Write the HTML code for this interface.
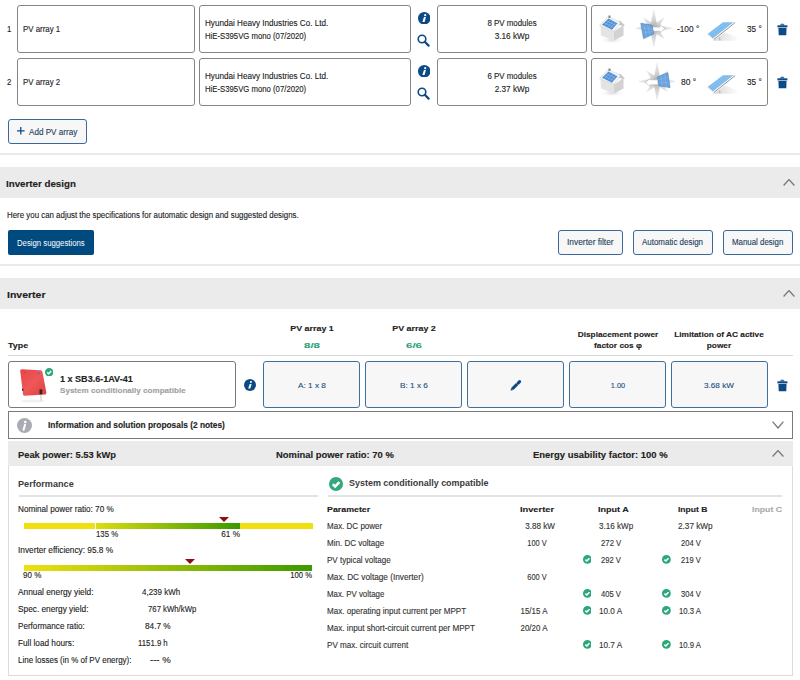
<!DOCTYPE html><html><head><meta charset="utf-8"><style>
html,body{margin:0;padding:0;width:800px;height:680px;overflow:hidden;background:#fff;position:relative}
.t{position:absolute;white-space:nowrap;line-height:1;font-family:"Liberation Sans",sans-serif;-webkit-text-stroke:0.12px currentColor}
</style></head><body>
<div class="t" style="left:7.30px;top:25.00px;font-size:8.4px;color:#222;transform:scaleX(0.9350);transform-origin:left top;">1</div>
<div style="position:absolute;left:17px;top:5px;width:178px;height:48px;box-sizing:border-box;border:1px solid #858585;border-radius:3px;"></div>
<div class="t" style="left:23.20px;top:25.00px;font-size:8.4px;color:#222;transform:scaleX(0.9399);transform-origin:left top;">PV array 1</div>
<div style="position:absolute;left:199px;top:5px;width:212px;height:48px;box-sizing:border-box;border:1px solid #858585;border-radius:3px;"></div>
<div class="t" style="left:205.30px;top:19.00px;font-size:8.3px;color:#222;transform:scaleX(0.9785);transform-origin:left top;">Hyundai Heavy Industries Co. Ltd.</div>
<div class="t" style="left:205.30px;top:32.00px;font-size:8.3px;color:#222;transform:scaleX(0.9337);transform-origin:left top;">HiE-S395VG mono (07/2020)</div>
<svg style="position:absolute;left:417.75px;top:11.75px" width="12.5" height="12.5" viewBox="0 0 12 12"><circle cx="6" cy="6" r="6" fill="#0b4a85"/><circle cx="6.9" cy="3.0" r="1.05" fill="#fff"/><path d="M5.7 4.9 L7.6 4.9 L6.3 9.6 L4.2 9.6 Z" fill="#fff"/></svg>
<svg style="position:absolute;left:417.3px;top:33.5px" width="13" height="13" viewBox="0 0 13 13"><circle cx="5" cy="5" r="3.8" fill="none" stroke="#0b4a85" stroke-width="1.6"/><path d="M7.8 7.8 L11.6 11.6" stroke="#0b4a85" stroke-width="2.2" stroke-linecap="round"/></svg>
<div style="position:absolute;left:437px;top:5px;width:150px;height:48px;box-sizing:border-box;border:1px solid #858585;border-radius:3px;"></div>
<div class="t" style="left:311.75px;width:400px;text-align:center;top:19.00px;font-size:8.3px;color:#222;transform:scaleX(0.9525);transform-origin:center top;">8 PV modules</div>
<div class="t" style="left:312px;width:400px;text-align:center;top:32.00px;font-size:8.3px;color:#222;transform:scaleX(0.9897);transform-origin:center top;">3.16 kWp</div>
<div style="position:absolute;left:591px;top:5px;width:177px;height:48px;box-sizing:border-box;border:1px solid #858585;border-radius:3px;"></div>
<svg style="position:absolute;left:596px;top:10px" width="32" height="36" viewBox="596 10 32 36"><defs><radialGradient id="hsh0"><stop offset="0" stop-color="#d8d8d8"/><stop offset="1" stop-color="#fff" stop-opacity="0"/></radialGradient></defs>
<ellipse cx="612" cy="40" rx="13" ry="4" fill="url(#hsh0)"/>
<path d="M600.5 26 L614 31.5 L614 40.5 L601 35.5 Z" fill="#e4e4e4"/>
<path d="M614 31.5 L623.5 25 L623.5 35.5 L614 40.5 Z" fill="#d2d2d2"/>
<path d="M616 24 L620 20.5 L625 25.5 L623 26 Z" fill="#c8c8c8"/>
<path d="M599.5 25.5 L608 16.5 L620.5 22.5 L614 31.5 Z" fill="#f7f7f7" stroke="#c4c4c4" stroke-width="0.5"/>
<path d="M602 24.8 L608.5 18.5 L617.5 23.2 L612 29.8 Z" fill="#4f8fd6"/>
<path d="M604 22.8 L613.8 27.5 M606 20.7 L615.8 25.3 M604.5 26 L610.7 19.6 M607.5 27.3 L613.5 20.8 M610 28.5 L615.8 22" stroke="#a9cdf0" stroke-width="0.45"/>
<rect x="608.5" y="15.5" width="2" height="2.5" fill="#888"/></svg>
<svg style="position:absolute;left:630px;top:8px" width="50" height="40" viewBox="630 8 50 40"><defs><radialGradient id="cg0" cx="653.8" cy="28.3" r="18" gradientUnits="userSpaceOnUse"><stop offset="0" stop-color="#a8a8a8"/><stop offset="0.45" stop-color="#d2d2d2"/><stop offset="1" stop-color="#f0f0f0"/></radialGradient></defs>
<path d="M642.5999999999999 17.1 L654.0999999999999 24.14 L665.0 17.1 L657.9599999999999 28.3 L665.0 39.5 L653.8 32.46 L642.5999999999999 39.5 L649.64 28.3 Z" fill="url(#cg0)" opacity="0.85"/>
<path d="M653.8 10.2 L657.0 25.1 L671.9 28.3 L657.0 31.5 L653.8 46.400000000000006 L650.5999999999999 31.5 L635.6999999999999 28.3 L650.5999999999999 25.1 Z" fill="url(#cg0)" stroke="#cfcfcf" stroke-width="0.3"/>
<path d="M651.5 27.1 L660 27.1 L660 24.5 L664.8 28.6 L660 32.7 L660 31.2 L651.5 31.2 Z" fill="#fff" stroke="#a8a8a8" stroke-width="0.5"/>
<path d="M640.8 23.3 L652 25.1 L653.8 33.9 L643.5 38.6 Z" fill="#6aa3de" stroke="#4a82c0" stroke-width="0.6"/>
<path d="M644 24.5 L646.5 37 M647.8 25 L649.8 35.5 M641.8 28 L652.8 29 M642.5 33 L653 31.5" stroke="#9cc4ec" stroke-width="0.35"/></svg>
<div class="t" style="left:677.30px;top:25.00px;font-size:8.3px;color:#222;transform:scaleX(0.9985);transform-origin:left top;">-100 °</div>
<svg style="position:absolute;left:704px;top:18px" width="36" height="26" viewBox="704 18 36 26"><defs><linearGradient id="psh0" x1="0" x2="1"><stop offset="0" stop-color="#d6d6d6"/><stop offset="1" stop-color="#fff"/></linearGradient></defs>
<path d="M713 40.8 L739 40.8 L737 37 L725 32.5 Z" fill="url(#psh0)"/>
<path d="M707.8 33.8 L723 22.2 L733.6 22.2 L713 38.4 Z" fill="#7dbcef"/>
<path d="M710.5 34 L725.5 23 M714 35.5 L729.5 23" stroke="#a6d2f4" stroke-width="0.35"/>
<path d="M707.8 33.8 L713 38.4 L713.8 39.4 L707.2 34.6 Z" fill="#d8d8d8"/>
<path d="M713 38.4 L733.6 22.2 L734.8 22.4 L713.8 39.4 Z" fill="#f4f4f4"/>
<path d="M713.8 39.6 L735.2 22.6" stroke="#8a8a8a" stroke-width="0.9"/>
<path d="M719.5 37.5 L720 40.5" stroke="#999" stroke-width="0.7"/></svg>
<div class="t" style="left:747.30px;top:25.00px;font-size:8.3px;color:#222;transform:scaleX(0.9893);transform-origin:left top;">35 °</div>
<svg style="position:absolute;left:776.5px;top:22.5px" width="11" height="13" viewBox="0 0 11 13"><path d="M0.4 2.3 H10.4 V4.4 H0.4 Z" fill="#0b4a85"/><path d="M3 2.4 Q3 0.6 5.2 0.6 Q7.5 0.6 7.5 2.4 Z" fill="#0b4a85" opacity="0.75"/><path d="M1.4 5.1 H9.5 L9.3 12.3 H1.7 Z" fill="#0b4a85"/></svg>
<div class="t" style="left:7.30px;top:78.00px;font-size:8.4px;color:#222;transform:scaleX(0.9350);transform-origin:left top;">2</div>
<div style="position:absolute;left:17px;top:58px;width:178px;height:48px;box-sizing:border-box;border:1px solid #858585;border-radius:3px;"></div>
<div class="t" style="left:23.20px;top:78.00px;font-size:8.4px;color:#222;transform:scaleX(0.9399);transform-origin:left top;">PV array 2</div>
<div style="position:absolute;left:199px;top:58px;width:212px;height:48px;box-sizing:border-box;border:1px solid #858585;border-radius:3px;"></div>
<div class="t" style="left:205.30px;top:72.00px;font-size:8.3px;color:#222;transform:scaleX(0.9785);transform-origin:left top;">Hyundai Heavy Industries Co. Ltd.</div>
<div class="t" style="left:205.30px;top:85.00px;font-size:8.3px;color:#222;transform:scaleX(0.9337);transform-origin:left top;">HiE-S395VG mono (07/2020)</div>
<svg style="position:absolute;left:417.75px;top:64.75px" width="12.5" height="12.5" viewBox="0 0 12 12"><circle cx="6" cy="6" r="6" fill="#0b4a85"/><circle cx="6.9" cy="3.0" r="1.05" fill="#fff"/><path d="M5.7 4.9 L7.6 4.9 L6.3 9.6 L4.2 9.6 Z" fill="#fff"/></svg>
<svg style="position:absolute;left:417.3px;top:86.5px" width="13" height="13" viewBox="0 0 13 13"><circle cx="5" cy="5" r="3.8" fill="none" stroke="#0b4a85" stroke-width="1.6"/><path d="M7.8 7.8 L11.6 11.6" stroke="#0b4a85" stroke-width="2.2" stroke-linecap="round"/></svg>
<div style="position:absolute;left:437px;top:58px;width:150px;height:48px;box-sizing:border-box;border:1px solid #858585;border-radius:3px;"></div>
<div class="t" style="left:311.75px;width:400px;text-align:center;top:72.00px;font-size:8.3px;color:#222;transform:scaleX(0.9525);transform-origin:center top;">6 PV modules</div>
<div class="t" style="left:312px;width:400px;text-align:center;top:85.00px;font-size:8.3px;color:#222;transform:scaleX(0.9897);transform-origin:center top;">2.37 kWp</div>
<div style="position:absolute;left:591px;top:58px;width:177px;height:48px;box-sizing:border-box;border:1px solid #858585;border-radius:3px;"></div>
<svg style="position:absolute;left:596px;top:63px" width="32" height="36" viewBox="596 10 32 36"><defs><radialGradient id="hsh1"><stop offset="0" stop-color="#d8d8d8"/><stop offset="1" stop-color="#fff" stop-opacity="0"/></radialGradient></defs>
<ellipse cx="612" cy="40" rx="13" ry="4" fill="url(#hsh1)"/>
<path d="M600.5 26 L614 31.5 L614 40.5 L601 35.5 Z" fill="#e4e4e4"/>
<path d="M614 31.5 L623.5 25 L623.5 35.5 L614 40.5 Z" fill="#d2d2d2"/>
<path d="M616 24 L620 20.5 L625 25.5 L623 26 Z" fill="#c8c8c8"/>
<path d="M599.5 25.5 L608 16.5 L620.5 22.5 L614 31.5 Z" fill="#f7f7f7" stroke="#c4c4c4" stroke-width="0.5"/>
<path d="M602 24.8 L608.5 18.5 L617.5 23.2 L612 29.8 Z" fill="#4f8fd6"/>
<path d="M604 22.8 L613.8 27.5 M606 20.7 L615.8 25.3 M604.5 26 L610.7 19.6 M607.5 27.3 L613.5 20.8 M610 28.5 L615.8 22" stroke="#a9cdf0" stroke-width="0.45"/>
<rect x="608.5" y="15.5" width="2" height="2.5" fill="#888"/></svg>
<svg style="position:absolute;left:630px;top:61px" width="50" height="40" viewBox="630 8 50 40"><defs><radialGradient id="cg1" cx="657.1" cy="28.4" r="18" gradientUnits="userSpaceOnUse"><stop offset="0" stop-color="#a8a8a8"/><stop offset="0.45" stop-color="#d2d2d2"/><stop offset="1" stop-color="#f0f0f0"/></radialGradient></defs>
<path d="M645.9 17.2 L657.4 24.24 L668.3000000000001 17.2 L661.26 28.4 L668.3000000000001 39.599999999999994 L657.1 32.56 L645.9 39.599999999999994 L652.94 28.4 Z" fill="url(#cg1)" opacity="0.85"/>
<path d="M657.1 10.299999999999997 L660.3000000000001 25.2 L675.2 28.4 L660.3000000000001 31.599999999999998 L657.1 46.5 L653.9 31.599999999999998 L639.0 28.4 L653.9 25.2 Z" fill="url(#cg1)" stroke="#cfcfcf" stroke-width="0.3"/>
<path d="M658 26.8 L650.2 26.8 L650.2 25.2 L645.4 29.6 L650.2 33.5 L650.2 31.8 L658 31.8 Z" fill="#fff" stroke="#a8a8a8" stroke-width="0.5"/>
<path d="M657.5 24 L667.8 19.6 L670.1 34.6 L659 32.8 Z" fill="#6aa3de" stroke="#4a82c0" stroke-width="0.6"/>
<path d="M661 22.5 L662.5 33.3 M664.5 21 L666.5 34 M657.8 27 L668.6 24 M658.3 30 L669.4 29.5" stroke="#9cc4ec" stroke-width="0.35"/></svg>
<div class="t" style="left:680.90px;top:78.00px;font-size:8.3px;color:#222;transform:scaleX(1.0162);transform-origin:left top;">80 °</div>
<svg style="position:absolute;left:704px;top:71px" width="36" height="26" viewBox="704 18 36 26"><defs><linearGradient id="psh1" x1="0" x2="1"><stop offset="0" stop-color="#d6d6d6"/><stop offset="1" stop-color="#fff"/></linearGradient></defs>
<path d="M713 40.8 L739 40.8 L737 37 L725 32.5 Z" fill="url(#psh1)"/>
<path d="M707.8 33.8 L723 22.2 L733.6 22.2 L713 38.4 Z" fill="#7dbcef"/>
<path d="M710.5 34 L725.5 23 M714 35.5 L729.5 23" stroke="#a6d2f4" stroke-width="0.35"/>
<path d="M707.8 33.8 L713 38.4 L713.8 39.4 L707.2 34.6 Z" fill="#d8d8d8"/>
<path d="M713 38.4 L733.6 22.2 L734.8 22.4 L713.8 39.4 Z" fill="#f4f4f4"/>
<path d="M713.8 39.6 L735.2 22.6" stroke="#8a8a8a" stroke-width="0.9"/>
<path d="M719.5 37.5 L720 40.5" stroke="#999" stroke-width="0.7"/></svg>
<div class="t" style="left:747.30px;top:78.00px;font-size:8.3px;color:#222;transform:scaleX(0.9893);transform-origin:left top;">35 °</div>
<svg style="position:absolute;left:776.5px;top:75.5px" width="11" height="13" viewBox="0 0 11 13"><path d="M0.4 2.3 H10.4 V4.4 H0.4 Z" fill="#0b4a85"/><path d="M3 2.4 Q3 0.6 5.2 0.6 Q7.5 0.6 7.5 2.4 Z" fill="#0b4a85" opacity="0.75"/><path d="M1.4 5.1 H9.5 L9.3 12.3 H1.7 Z" fill="#0b4a85"/></svg>
<div style="position:absolute;left:8px;top:119px;width:79px;height:25px;box-sizing:border-box;border:1px solid #3a6898;border-radius:3px;background:#f7f7f7;"></div>
<svg style="position:absolute;left:17.2px;top:127.3px" width="8" height="8" viewBox="0 0 8 8"><path d="M3.8 0 V7.6 M0 3.8 H7.6" stroke="#0b4a85" stroke-width="1.25"/></svg>
<div class="t" style="left:28.80px;top:128.00px;font-size:8.3px;color:#243f60;transform:scaleX(0.9765);transform-origin:left top;">Add PV array</div>
<div style="position:absolute;left:0px;top:153px;width:800px;height:2px;box-sizing:border-box;background:#ebebeb;"></div>
<div style="position:absolute;left:0px;top:167px;width:800px;height:31px;box-sizing:border-box;background:#ebebeb;"></div>
<div class="t" style="left:6.30px;top:180.00px;font-size:9.2px;font-weight:bold;color:#222;transform:scaleX(1.0611);transform-origin:left top;">Inverter design</div>
<svg style="position:absolute;left:783px;top:179.4px" width="12" height="7.5" viewBox="0 0 12 7.5"><path d="M0.6 6.5 L6.0 0.6 L11.4 6.5" fill="none" stroke="#777" stroke-width="1.3"/></svg>
<div class="t" style="left:7.30px;top:211.00px;font-size:8.3px;color:#222;transform:scaleX(0.9510);transform-origin:left top;">Here you can adjust the specifications for automatic design and suggested designs.</div>
<div style="position:absolute;left:8px;top:230px;width:86px;height:25px;box-sizing:border-box;background:#004a80;border-radius:2px;"></div>
<div class="t" style="left:16.90px;top:239.00px;font-size:8.3px;color:#fff;transform:scaleX(0.9348);transform-origin:left top;-webkit-text-stroke:0;">Design suggestions</div>
<div style="position:absolute;left:557.5px;top:230px;width:65.0px;height:25px;box-sizing:border-box;border:1px solid #3a6898;border-radius:3px;background:#f7f7f7;"></div>
<div class="t" style="left:566.50px;top:238.00px;font-size:8.3px;color:#243f60;transform:scaleX(1.0106);transform-origin:left top;">Inverter filter</div>
<div style="position:absolute;left:633px;top:230px;width:79.5px;height:25px;box-sizing:border-box;border:1px solid #3a6898;border-radius:3px;background:#f7f7f7;"></div>
<div class="t" style="left:642.10px;top:238.00px;font-size:8.3px;color:#243f60;transform:scaleX(0.9583);transform-origin:left top;">Automatic design</div>
<div style="position:absolute;left:722.5px;top:230px;width:70.0px;height:25px;box-sizing:border-box;border:1px solid #3a6898;border-radius:3px;background:#f7f7f7;"></div>
<div class="t" style="left:731.50px;top:238.00px;font-size:8.3px;color:#243f60;transform:scaleX(0.9506);transform-origin:left top;">Manual design</div>
<div style="position:absolute;left:0px;top:264px;width:800px;height:2px;box-sizing:border-box;background:#ebebeb;"></div>
<div style="position:absolute;left:0px;top:278px;width:800px;height:31px;box-sizing:border-box;background:#ebebeb;"></div>
<div class="t" style="left:6.50px;top:291.00px;font-size:9.2px;font-weight:bold;color:#222;transform:scaleX(1.1418);transform-origin:left top;">Inverter</div>
<svg style="position:absolute;left:783px;top:290px" width="12" height="7.5" viewBox="0 0 12 7.5"><path d="M0.6 6.5 L6.0 0.6 L11.4 6.5" fill="none" stroke="#777" stroke-width="1.3"/></svg>
<div class="t" style="left:7.50px;top:342.00px;font-size:7.7px;font-weight:bold;color:#222;transform:scaleX(1.1568);transform-origin:left top;">Type</div>
<div class="t" style="left:111.5px;width:400px;text-align:center;top:325.00px;font-size:7.7px;font-weight:bold;color:#222;transform:scaleX(1.1561);transform-origin:center top;">PV array 1</div>
<div class="t" style="left:111.5px;width:400px;text-align:center;top:342.00px;font-size:7.7px;font-weight:bold;color:#2ea37a;transform:scaleX(1.4784);transform-origin:center top;">8/8</div>
<div class="t" style="left:213.5px;width:400px;text-align:center;top:325.00px;font-size:7.7px;font-weight:bold;color:#222;transform:scaleX(1.1561);transform-origin:center top;">PV array 2</div>
<div class="t" style="left:213.5px;width:400px;text-align:center;top:342.00px;font-size:7.7px;font-weight:bold;color:#2ea37a;transform:scaleX(1.4784);transform-origin:center top;">6/6</div>
<div class="t" style="left:417.9px;width:400px;text-align:center;top:331.00px;font-size:7.7px;font-weight:bold;color:#222;transform:scaleX(1.0767);transform-origin:center top;">Displacement power</div>
<div class="t" style="left:417.5px;width:400px;text-align:center;top:342.00px;font-size:7.7px;font-weight:bold;color:#222;transform:scaleX(1.0800);transform-origin:center top;">factor cos φ</div>
<div class="t" style="left:519px;width:400px;text-align:center;top:331.00px;font-size:7.7px;font-weight:bold;color:#222;transform:scaleX(1.0800);transform-origin:center top;">Limitation of AC active</div>
<div class="t" style="left:519px;width:400px;text-align:center;top:342.00px;font-size:7.7px;font-weight:bold;color:#222;transform:scaleX(1.0800);transform-origin:center top;">power</div>
<div style="position:absolute;left:8px;top:355px;width:785px;height:1px;box-sizing:border-box;background:#d8d8d8;"></div>
<div style="position:absolute;left:8px;top:361px;width:228px;height:47px;box-sizing:border-box;border:1px solid #7a7a7a;border-radius:3px;"></div>
<svg style="position:absolute;left:14px;top:364px" width="36" height="42" viewBox="14 364 36 42"><defs><linearGradient id="invg" x1="0" y1="0" x2="1" y2="1"><stop offset="0" stop-color="#e84446"/><stop offset="0.5" stop-color="#ee5858"/><stop offset="1" stop-color="#e0403f"/></linearGradient></defs>
<ellipse cx="33" cy="401" rx="12" ry="1.5" fill="#f0f0f0"/>
<path d="M21.5 369.3 L40.5 370.2 Q42 370.3 42.4 371.8 L46.4 392.5 Q46.6 394.3 45 394.5 L24.8 395.8 Q23.2 395.9 23 394.2 L20.2 370.8 Q20.1 369.3 21.5 369.3 Z" fill="url(#invg)"/>
<rect x="39.5" y="389.3" width="2.8" height="5" fill="#2a2a2a"/>
<path d="M40.8 394.5 L41.2 400.5" stroke="#999" stroke-width="0.6"/>
<rect x="22.2" y="388.5" width="1.2" height="2.5" fill="#333"/>
<path d="M37.5 373 L40 372.6 L39.5 374.5 Z" fill="#4a70b8"/>
<circle cx="24.5" cy="372.5" r="0.4" fill="#822"/></svg>
<svg style="position:absolute;left:44.699999999999996px;top:367.8px" width="8.4" height="8.4" viewBox="0 0 8.4 8.4"><circle cx="4.2" cy="4.2" r="4.2" fill="#2aa878"/><path d="M2.27 4.37 L3.70 5.71 L6.22 3.02" fill="none" stroke="#fff" stroke-width="1.51"/></svg>
<div class="t" style="left:60.30px;top:375.00px;font-size:8.6px;font-weight:bold;color:#222;transform:scaleX(1.0520);transform-origin:left top;">1 x SB3.6-1AV-41</div>
<div class="t" style="left:60.10px;top:387.00px;font-size:8.1px;font-weight:bold;color:#a0a0a0;transform:scaleX(0.9981);transform-origin:left top;">System conditionally compatible</div>
<svg style="position:absolute;left:244.0px;top:378.7px" width="12" height="12" viewBox="0 0 12 12"><circle cx="6" cy="6" r="6" fill="#0b4a85"/><circle cx="6.9" cy="3.0" r="1.05" fill="#fff"/><path d="M5.7 4.9 L7.6 4.9 L6.3 9.6 L4.2 9.6 Z" fill="#fff"/></svg>
<div style="position:absolute;left:263px;top:361px;width:97px;height:47px;box-sizing:border-box;border:1px solid #3f6f9f;border-radius:3px;background:#f7f7f7;"></div>
<div class="t" style="left:112px;width:400px;text-align:center;top:382.00px;font-size:7.7px;color:#24507e;transform:scaleX(1.0699);transform-origin:center top;">A: 1 x 8</div>
<div style="position:absolute;left:365px;top:361px;width:97px;height:47px;box-sizing:border-box;border:1px solid #3f6f9f;border-radius:3px;background:#f7f7f7;"></div>
<div class="t" style="left:214.3px;width:400px;text-align:center;top:382.00px;font-size:7.7px;color:#24507e;transform:scaleX(1.0699);transform-origin:center top;">B: 1 x 6</div>
<div style="position:absolute;left:467px;top:361px;width:97px;height:47px;box-sizing:border-box;border:1px solid #3f6f9f;border-radius:3px;background:#f7f7f7;"></div>
<div style="position:absolute;left:569px;top:361px;width:97px;height:47px;box-sizing:border-box;border:1px solid #3f6f9f;border-radius:3px;background:#f7f7f7;"></div>
<div class="t" style="left:418.20000000000005px;width:400px;text-align:center;top:382.00px;font-size:7.7px;color:#24507e;transform:scaleX(0.9553);transform-origin:center top;">1.00</div>
<div style="position:absolute;left:671px;top:361px;width:97px;height:47px;box-sizing:border-box;border:1px solid #3f6f9f;border-radius:3px;background:#f7f7f7;"></div>
<div class="t" style="left:519.4px;width:400px;text-align:center;top:382.00px;font-size:7.7px;color:#24507e;transform:scaleX(1.0637);transform-origin:center top;">3.68 kW</div>
<svg style="position:absolute;left:509px;top:378px" width="14" height="14" viewBox="0 0 14 14"><path d="M3.2 11 L8.1 6.1" stroke="#0b4a85" stroke-width="3"/><path d="M1.6 12.6 L2.1 10 L4.2 12.1 Z" fill="#0b4a85"/><path d="M9.1 5.1 L10.6 3.6" stroke="#0b4a85" stroke-width="3" stroke-linecap="round"/></svg>
<svg style="position:absolute;left:776.5px;top:378.5px" width="11" height="13" viewBox="0 0 11 13"><path d="M0.4 2.3 H10.4 V4.4 H0.4 Z" fill="#0b4a85"/><path d="M3 2.4 Q3 0.6 5.2 0.6 Q7.5 0.6 7.5 2.4 Z" fill="#0b4a85" opacity="0.75"/><path d="M1.4 5.1 H9.5 L9.3 12.3 H1.7 Z" fill="#0b4a85"/></svg>
<div style="position:absolute;left:8px;top:411px;width:785px;height:28px;box-sizing:border-box;border:1px solid #7a7a7a;"></div>
<svg style="position:absolute;left:16.5px;top:417.5px" width="15" height="15" viewBox="0 0 15 15"><circle cx="7.5" cy="7.5" r="7.5" fill="#a9adb3"/><circle cx="8.3" cy="4" r="1.3" fill="#fff"/><path d="M8 6.8 L6.6 11.8" stroke="#fff" stroke-width="2" stroke-linecap="round"/></svg>
<div class="t" style="left:47.60px;top:422.00px;font-size:8.2px;font-weight:bold;color:#222;transform:scaleX(1.0180);transform-origin:left top;">Information and solution proposals (2 notes)</div>
<svg style="position:absolute;left:772px;top:420.8px" width="12" height="8" viewBox="0 0 12 8"><path d="M0.6 0.6 L6.0 7 L11.4 0.6" fill="none" stroke="#777" stroke-width="1.3"/></svg>
<div style="position:absolute;left:8px;top:441px;width:785px;height:235px;box-sizing:border-box;border:1px solid #dcdcdc;border-top:none;"></div>
<div style="position:absolute;left:8px;top:441px;width:785px;height:25px;box-sizing:border-box;background:#ebebeb;"></div>
<div class="t" style="left:17.70px;top:451.00px;font-size:9.1px;font-weight:bold;color:#222;transform:scaleX(1.0248);transform-origin:left top;">Peak power: 5.53 kWp</div>
<div class="t" style="left:275.90px;top:451.00px;font-size:9.1px;font-weight:bold;color:#222;transform:scaleX(1.0360);transform-origin:left top;">Nominal power ratio: 70 %</div>
<div class="t" style="left:533.30px;top:451.00px;font-size:9.1px;font-weight:bold;color:#222;transform:scaleX(1.0410);transform-origin:left top;">Energy usability factor: 100 %</div>
<svg style="position:absolute;left:772px;top:450.3px" width="12" height="7.5" viewBox="0 0 12 7.5"><path d="M0.6 6.5 L6.0 0.6 L11.4 6.5" fill="none" stroke="#777" stroke-width="1.3"/></svg>
<div class="t" style="left:18.30px;top:480.00px;font-size:9.3px;font-weight:bold;color:#3a3a3a;transform:scaleX(0.9799);transform-origin:left top;-webkit-text-stroke:0;">Performance</div>
<div style="position:absolute;left:19px;top:495px;width:299px;height:2px;box-sizing:border-box;background:#e3e3e3;"></div>
<div class="t" style="left:18.30px;top:505.00px;font-size:8.3px;color:#222;transform:scaleX(0.9834);transform-origin:left top;">Nominal power ratio: 70 %</div>
<div style="position:absolute;left:23.6px;top:523px;width:71.4px;height:6px;box-sizing:border-box;background:#f0e010;"></div>
<div style="position:absolute;left:96px;top:523px;width:144px;height:6px;box-sizing:border-box;background:linear-gradient(90deg,#dcdc10,#3a9a00);"></div>
<div style="position:absolute;left:240px;top:523px;width:73px;height:6px;box-sizing:border-box;background:#f0e010;"></div>
<svg style="position:absolute;left:218.6px;top:517px" width="10" height="5" viewBox="0 0 10 5"><path d="M0 0 H10 L5 5 Z" fill="#8b0e14"/></svg>
<div class="t" style="left:95.90px;top:530.00px;font-size:8.3px;color:#222;transform:scaleX(0.9392);transform-origin:left top;">135 %</div>
<div class="t" style="left:-160px;width:400px;text-align:right;top:530.00px;font-size:8.3px;color:#222;transform:scaleX(0.9883);transform-origin:right top;">61 %</div>
<div class="t" style="left:18.30px;top:546.00px;font-size:8.3px;color:#222;transform:scaleX(0.9978);transform-origin:left top;">Inverter efficiency: 95.8 %</div>
<div style="position:absolute;left:24px;top:565px;width:288.4px;height:5.5px;box-sizing:border-box;background:linear-gradient(90deg,#f0e010,#3a9a00);"></div>
<svg style="position:absolute;left:185.4px;top:558.6px" width="10" height="5" viewBox="0 0 10 5"><path d="M0 0 H10 L5 5 Z" fill="#8b0e14"/></svg>
<div class="t" style="left:23.30px;top:571.00px;font-size:8.3px;color:#222;transform:scaleX(0.9671);transform-origin:left top;">90 %</div>
<div class="t" style="left:-87.60000000000002px;width:400px;text-align:right;top:571.00px;font-size:8.3px;color:#222;transform:scaleX(0.9222);transform-origin:right top;">100 %</div>
<div class="t" style="left:18.30px;top:588.00px;font-size:8.3px;color:#222;transform:scaleX(1.0035);transform-origin:left top;">Annual energy yield:</div>
<div class="t" style="left:141.80px;top:588.00px;font-size:8.3px;color:#222;transform:scaleX(0.9629);transform-origin:left top;">4,239 kWh</div>
<div class="t" style="left:18.30px;top:605.00px;font-size:8.3px;color:#222;transform:scaleX(0.9982);transform-origin:left top;">Spec. energy yield:</div>
<div class="t" style="left:148.30px;top:605.00px;font-size:8.3px;color:#222;transform:scaleX(0.9350);transform-origin:left top;">767 kWh/kWp</div>
<div class="t" style="left:18.30px;top:622.00px;font-size:8.3px;color:#222;transform:scaleX(0.9773);transform-origin:left top;">Performance ratio:</div>
<div class="t" style="left:145.30px;top:622.00px;font-size:8.3px;color:#222;transform:scaleX(0.9944);transform-origin:left top;">84.7 %</div>
<div class="t" style="left:18.30px;top:639.00px;font-size:8.3px;color:#222;transform:scaleX(0.9906);transform-origin:left top;">Full load hours:</div>
<div class="t" style="left:138.30px;top:639.00px;font-size:8.3px;color:#222;transform:scaleX(0.9373);transform-origin:left top;">1151.9 h</div>
<div class="t" style="left:18.30px;top:656.00px;font-size:8.3px;color:#222;transform:scaleX(0.9609);transform-origin:left top;">Line losses (in % of PV energy):</div>
<div class="t" style="left:150.30px;top:656.00px;font-size:8.3px;color:#222;transform:scaleX(1.1510);transform-origin:left top;">--- %</div>
<svg style="position:absolute;left:328.9px;top:477.25px" width="14" height="14" viewBox="0 0 14 14"><circle cx="7.0" cy="7.0" r="7.0" fill="#34a87c"/><path d="M3.78 7.28 L6.16 9.52 L10.36 5.04" fill="none" stroke="#fff" stroke-width="2.52"/></svg>
<div class="t" style="left:349.30px;top:478.00px;font-size:9.6px;font-weight:bold;color:#3a3a3a;transform:scaleX(0.9341);transform-origin:left top;-webkit-text-stroke:0;">System conditionally compatible</div>
<div style="position:absolute;left:328px;top:495px;width:454px;height:2px;box-sizing:border-box;background:#e3e3e3;"></div>
<div class="t" style="left:327.30px;top:506.00px;font-size:7.8px;font-weight:bold;color:#222;transform:scaleX(1.1322);transform-origin:left top;">Parameter</div>
<div class="t" style="left:337.29999999999995px;width:400px;text-align:center;top:506.00px;font-size:7.8px;font-weight:bold;color:#222;transform:scaleX(1.1919);transform-origin:center top;">Inverter</div>
<div class="t" style="left:597.70px;top:506.00px;font-size:7.8px;font-weight:bold;color:#222;transform:scaleX(1.1595);transform-origin:left top;">Input A</div>
<div class="t" style="left:678.30px;top:506.00px;font-size:7.8px;font-weight:bold;color:#222;transform:scaleX(1.0946);transform-origin:left top;">Input B</div>
<div class="t" style="left:382px;width:400px;text-align:right;top:506.00px;font-size:7.8px;font-weight:bold;color:#aaa;transform:scaleX(1.1132);transform-origin:right top;">Input C</div>
<div class="t" style="left:327.30px;top:523.00px;font-size:8.2px;color:#333;transform:scaleX(0.9783);transform-origin:left top;">Max. DC power</div>
<div class="t" style="left:339.5px;width:400px;text-align:center;top:523.00px;font-size:8.2px;color:#333;transform:scaleX(0.9885);transform-origin:center top;">3.88 kW</div>
<div class="t" style="left:599.30px;top:523.00px;font-size:8.2px;color:#333;transform:scaleX(0.9915);transform-origin:left top;">3.16 kWp</div>
<div class="t" style="left:678.30px;top:523.00px;font-size:8.2px;color:#333;transform:scaleX(1.0031);transform-origin:left top;">2.37 kWp</div>
<div class="t" style="left:327.30px;top:540.00px;font-size:8.2px;color:#333;transform:scaleX(0.9837);transform-origin:left top;">Min. DC voltage</div>
<div class="t" style="left:337.29999999999995px;width:400px;text-align:center;top:540.00px;font-size:8.2px;color:#333;transform:scaleX(0.9063);transform-origin:center top;">100 V</div>
<div class="t" style="left:601.30px;top:540.00px;font-size:8.2px;color:#333;transform:scaleX(0.9483);transform-origin:left top;">272 V</div>
<div class="t" style="left:680.90px;top:540.00px;font-size:8.2px;color:#333;transform:scaleX(0.9203);transform-origin:left top;">204 V</div>
<div class="t" style="left:327.30px;top:557.00px;font-size:8.2px;color:#333;transform:scaleX(0.9786);transform-origin:left top;">PV typical voltage</div>
<svg style="position:absolute;left:582.7px;top:555.0px" width="8.8" height="8.8" viewBox="0 0 8.8 8.8"><circle cx="4.4" cy="4.4" r="4.4" fill="#2aa878"/><path d="M2.38 4.58 L3.87 5.98 L6.51 3.17" fill="none" stroke="#fff" stroke-width="1.58"/></svg>
<div class="t" style="left:601.30px;top:557.00px;font-size:8.2px;color:#333;transform:scaleX(0.9296);transform-origin:left top;">292 V</div>
<svg style="position:absolute;left:662.3000000000001px;top:555.0px" width="8.8" height="8.8" viewBox="0 0 8.8 8.8"><circle cx="4.4" cy="4.4" r="4.4" fill="#2aa878"/><path d="M2.38 4.58 L3.87 5.98 L6.51 3.17" fill="none" stroke="#fff" stroke-width="1.58"/></svg>
<div class="t" style="left:680.90px;top:557.00px;font-size:8.2px;color:#333;transform:scaleX(0.9203);transform-origin:left top;">219 V</div>
<div class="t" style="left:327.30px;top:574.00px;font-size:8.2px;color:#333;transform:scaleX(1.0071);transform-origin:left top;">Max. DC voltage (Inverter)</div>
<div class="t" style="left:337.29999999999995px;width:400px;text-align:center;top:574.00px;font-size:8.2px;color:#333;transform:scaleX(0.9063);transform-origin:center top;">600 V</div>
<div class="t" style="left:327.30px;top:591.00px;font-size:8.2px;color:#333;transform:scaleX(0.9610);transform-origin:left top;">Max. PV voltage</div>
<svg style="position:absolute;left:582.7px;top:589.0px" width="8.8" height="8.8" viewBox="0 0 8.8 8.8"><circle cx="4.4" cy="4.4" r="4.4" fill="#2aa878"/><path d="M2.38 4.58 L3.87 5.98 L6.51 3.17" fill="none" stroke="#fff" stroke-width="1.58"/></svg>
<div class="t" style="left:601.30px;top:591.00px;font-size:8.2px;color:#333;transform:scaleX(0.9296);transform-origin:left top;">405 V</div>
<svg style="position:absolute;left:662.3000000000001px;top:589.0px" width="8.8" height="8.8" viewBox="0 0 8.8 8.8"><circle cx="4.4" cy="4.4" r="4.4" fill="#2aa878"/><path d="M2.38 4.58 L3.87 5.98 L6.51 3.17" fill="none" stroke="#fff" stroke-width="1.58"/></svg>
<div class="t" style="left:680.90px;top:591.00px;font-size:8.2px;color:#333;transform:scaleX(0.9203);transform-origin:left top;">304 V</div>
<div class="t" style="left:327.30px;top:608.00px;font-size:8.2px;color:#333;transform:scaleX(0.9867);transform-origin:left top;">Max. operating input current per MPPT</div>
<div class="t" style="left:333.70000000000005px;width:400px;text-align:center;top:608.00px;font-size:8.2px;color:#333;transform:scaleX(0.9683);transform-origin:center top;">15/15 A</div>
<svg style="position:absolute;left:582.7px;top:606.0px" width="8.8" height="8.8" viewBox="0 0 8.8 8.8"><circle cx="4.4" cy="4.4" r="4.4" fill="#2aa878"/><path d="M2.38 4.58 L3.87 5.98 L6.51 3.17" fill="none" stroke="#fff" stroke-width="1.58"/></svg>
<div class="t" style="left:598.60px;top:608.00px;font-size:8.2px;color:#333;transform:scaleX(0.9949);transform-origin:left top;">10.0 A</div>
<svg style="position:absolute;left:662.3000000000001px;top:606.0px" width="8.8" height="8.8" viewBox="0 0 8.8 8.8"><circle cx="4.4" cy="4.4" r="4.4" fill="#2aa878"/><path d="M2.38 4.58 L3.87 5.98 L6.51 3.17" fill="none" stroke="#fff" stroke-width="1.58"/></svg>
<div class="t" style="left:679.10px;top:608.00px;font-size:8.2px;color:#333;transform:scaleX(0.9432);transform-origin:left top;">10.3 A</div>
<div class="t" style="left:327.30px;top:625.00px;font-size:8.2px;color:#333;transform:scaleX(0.9916);transform-origin:left top;">Max. input short-circuit current per MPPT</div>
<div class="t" style="left:333.70000000000005px;width:400px;text-align:center;top:625.00px;font-size:8.2px;color:#333;transform:scaleX(0.9683);transform-origin:center top;">20/20 A</div>
<div class="t" style="left:327.30px;top:642.00px;font-size:8.2px;color:#333;transform:scaleX(0.9871);transform-origin:left top;">PV max. circuit current</div>
<svg style="position:absolute;left:582.7px;top:640.0px" width="8.8" height="8.8" viewBox="0 0 8.8 8.8"><circle cx="4.4" cy="4.4" r="4.4" fill="#2aa878"/><path d="M2.38 4.58 L3.87 5.98 L6.51 3.17" fill="none" stroke="#fff" stroke-width="1.58"/></svg>
<div class="t" style="left:598.60px;top:642.00px;font-size:8.2px;color:#333;transform:scaleX(0.9949);transform-origin:left top;">10.7 A</div>
<svg style="position:absolute;left:662.3000000000001px;top:640.0px" width="8.8" height="8.8" viewBox="0 0 8.8 8.8"><circle cx="4.4" cy="4.4" r="4.4" fill="#2aa878"/><path d="M2.38 4.58 L3.87 5.98 L6.51 3.17" fill="none" stroke="#fff" stroke-width="1.58"/></svg>
<div class="t" style="left:679.10px;top:642.00px;font-size:8.2px;color:#333;transform:scaleX(0.9432);transform-origin:left top;">10.9 A</div>
</body></html>
